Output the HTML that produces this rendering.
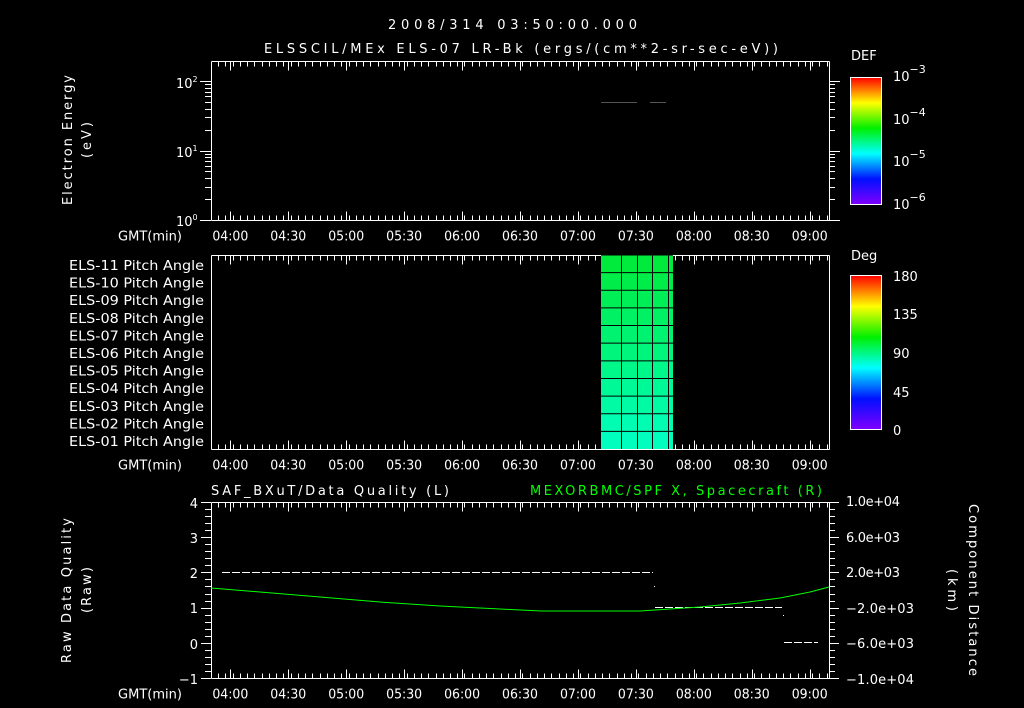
<!DOCTYPE html>
<html><head><meta charset="utf-8"><style>
html,body{margin:0;padding:0;background:#000;width:1024px;height:708px;overflow:hidden}
svg{display:block}
text{font-family:"DejaVu Sans","Liberation Sans",sans-serif;fill:#fff;font-size:13px}
</style></head><body>
<svg id="s" width="1024" height="708" viewBox="0 0 1024 708" xmlns="http://www.w3.org/2000/svg">
<defs>
<linearGradient id="rb" x1="0" y1="1" x2="0" y2="0">
<stop offset="0" stop-color="#8000ff"/><stop offset="0.2" stop-color="#0010ff"/><stop offset="0.4" stop-color="#00ffff"/><stop offset="0.6" stop-color="#00f000"/><stop offset="0.8" stop-color="#ffff00"/><stop offset="1" stop-color="#ff0000"/>
</linearGradient>
</defs>
<text x="388" y="29" font-size="17" textLength="249" lengthAdjust="spacing">2008/314 03:50:00.000</text>
<text x="264" y="53" font-size="16" textLength="514" lengthAdjust="spacing">ELSSCIL/MEx ELS-07 LR-Bk  (ergs/(cm**2-sr-sec-eV))</text>
<g id="g" fill="none" stroke="#fff" stroke-width="1"></g>
<text transform="translate(72,205) rotate(-90)" font-size="15" textLength="130" lengthAdjust="spacing">Electron Energy</text>
<text transform="translate(91,158) rotate(-90)" font-size="15" textLength="36" lengthAdjust="spacing">(eV)</text>
<text x="176" y="88">10<tspan font-size="8" dy="-6">2</tspan></text>
<text x="176" y="157">10<tspan font-size="8" dy="-6">1</tspan></text>
<text x="176" y="226">10<tspan font-size="8" dy="-6">0</tspan></text>
<line x1="601" y1="102.5" x2="637" y2="102.5" stroke="#555"/><line x1="650" y1="102.5" x2="666" y2="102.5" stroke="#555"/>
<rect x="850.5" y="77.5" width="31" height="127" fill="url(#rb)" stroke="#fff"/>
<text x="851" y="60" font-size="17">DEF</text>
<text x="893" y="81" font-size="17">10<tspan font-size="11" dy="-8">−3</tspan></text>
<text x="893" y="124" font-size="17">10<tspan font-size="11" dy="-8">−4</tspan></text>
<text x="893" y="166" font-size="17">10<tspan font-size="11" dy="-8">−5</tspan></text>
<text x="893" y="209" font-size="17">10<tspan font-size="11" dy="-8">−6</tspan></text>
<g id="pa"></g>
<rect x="850.5" y="275.5" width="31" height="154" fill="url(#rb)" stroke="#fff"/>
<text x="851" y="260" font-size="17">Deg</text>
<g font-size="17">
<text x="893" y="281">180</text>
<text x="893" y="319">135</text>
<text x="893" y="358">90</text>
<text x="893" y="397">45</text>
<text x="893" y="435">0</text>
</g>
<text x="211" y="495" font-size="16" textLength="238" lengthAdjust="spacing">SAF_BXuT/Data Quality (L)</text>
<text x="530" y="495" font-size="16" textLength="292" lengthAdjust="spacing" style="fill:#00ff00">MEXORBMC/SPF X, Spacecraft (R)</text>
<text transform="translate(71,663) rotate(-90)" font-size="15" textLength="145" lengthAdjust="spacing">Raw Data Quality</text>
<text transform="translate(91,613) rotate(-90)" font-size="15" textLength="46" lengthAdjust="spacing">(Raw)</text>
<text transform="translate(969,504) rotate(90)" font-size="15" textLength="172" lengthAdjust="spacing">Component Distance</text>
<text transform="translate(948,569) rotate(90)" font-size="15" textLength="42" lengthAdjust="spacing">(km)</text>
<g text-anchor="end" font-size="14">
<text x="198" y="508">4</text><text x="198" y="543">3</text><text x="198" y="578">2</text><text x="198" y="613">1</text><text x="198" y="649">0</text><text x="198" y="684">−1</text>
</g>
<g font-size="13">
<text x="846" y="506" textLength="54" lengthAdjust="spacing">1.0e+04</text><text x="846" y="542" textLength="54" lengthAdjust="spacing">6.0e+03</text><text x="846" y="577" textLength="54" lengthAdjust="spacing">2.0e+03</text><text x="846" y="613" textLength="68" lengthAdjust="spacing">−2.0e+03</text><text x="846" y="648" textLength="68" lengthAdjust="spacing">−6.0e+03</text><text x="846" y="684" textLength="68" lengthAdjust="spacing">−1.0e+04</text>
</g>
<line x1="222" y1="572.5" x2="653" y2="572.5" stroke="#fff" stroke-dasharray="8,2"/>
<line x1="655" y1="607.5" x2="782" y2="607.5" stroke="#fff" stroke-dasharray="8,2"/>
<line x1="784" y1="642.5" x2="818" y2="642.5" stroke="#fff" stroke-dasharray="8,2"/>
<rect x="654" y="586" width="1" height="1" fill="#fff"/><rect x="783" y="615" width="1" height="1" fill="#fff"/>
<polyline fill="none" stroke="#00ff00" points="211,588 260,592 320,597 380,602 440,606 500,609 541,611 640,611 700,607 740,603 780,598 810,592 829,587"/>
</svg>
<script>
var s=document.getElementById('s'),g=document.getElementById('g'),NS='http://www.w3.org/2000/svg';
function L(x1,y1,x2,y2,c){var l=document.createElementNS(NS,'line');l.setAttribute('x1',x1);l.setAttribute('y1',y1);l.setAttribute('x2',x2);l.setAttribute('y2',y2);if(c)l.setAttribute('stroke',c);g.appendChild(l);}
function T(x,y,t,a,fs){var e=document.createElementNS(NS,'text');e.setAttribute('x',x);e.setAttribute('y',y);if(a)e.setAttribute('text-anchor',a);if(fs)e.setAttribute('font-size',fs);e.textContent=t;s.appendChild(e);return e;}
var X0=211,X1=829;function tx(m){return X0+m*(X1-X0)/320;}
var panels=[[61,220],[255,449],[502,678]];
var labels=['04:00','04:30','05:00','05:30','06:00','06:30','07:00','07:30','08:00','08:30','09:00'];
var pa=document.getElementById('pa');
for(var r=0;r<11;r++){var y0=255+r*194/11;var f=r/10;var gc=Math.round(235+20*f),bc=Math.round(60+130*f);
var re=document.createElementNS(NS,'rect');re.setAttribute('x',601);re.setAttribute('y',y0);re.setAttribute('width',72);re.setAttribute('height',194/11);re.setAttribute('fill','rgb(0,'+gc+','+bc+')');pa.appendChild(re);
var gl=document.createElementNS(NS,'line');gl.setAttribute('x1',601);gl.setAttribute('x2',673);gl.setAttribute('y1',y0);gl.setAttribute('y2',y0);gl.setAttribute('stroke','#000');pa.appendChild(gl);}
[621,637,652,668].forEach(function(x){var gl=document.createElementNS(NS,'line');gl.setAttribute('x1',x+.5);gl.setAttribute('x2',x+.5);gl.setAttribute('y1',255);gl.setAttribute('y2',449);gl.setAttribute('stroke','#000');pa.appendChild(gl);});
var nm=['ELS-11','ELS-10','ELS-09','ELS-08','ELS-07','ELS-06','ELS-05','ELS-04','ELS-03','ELS-02','ELS-01'];
for(var r=0;r<11;r++){var e=T(69,270+r*17.6,nm[r]+' Pitch Angle',null,13);e.setAttribute('textLength',135);e.setAttribute('lengthAdjust','spacingAndGlyphs');}
panels.forEach(function(p){var t=p[0]+.5,b=p[1]+.5;
L(X0+.5,t,X1+.5,t);L(X0+.5,b,X1+.5,b);L(X0+.5,t,X0+.5,b);L(X1+.5,t,X1+.5,b);
for(var i=0;i<=85;i++){var m=i*3.75;var x=Math.round(tx(m))+.5;var h=5;L(x,t,x,t+h);L(x,b,x,b-h);}
for(var k=0;k<11;k++){var m2=10+30*k,xx=Math.round(tx(m2))+.5;L(xx,t,xx,t+9);L(xx,b,xx,b-9);var e=T(tx(m2)-18,b+20,labels[k],null,14);e.setAttribute('textLength',36);e.setAttribute('lengthAdjust','spacingAndGlyphs');}
var e=T(118,b+20,'GMT(min)',null,14);e.setAttribute('textLength',64);e.setAttribute('lengthAdjust','spacingAndGlyphs');});
var dec=69.5;for(var d=0;d<3;d++){for(var k=1;k<10;k++){var y=220-(d+Math.log10(k))*dec;if(y<61)continue;y=Math.round(y)+.5;var h=k==1?11:6;L(211-h,y,211,y);L(829,y,829+h,y);}}
for(var i=0;i<=25;i++){var y=Math.round(502+i*176/25)+.5;var h=(i%5==0)?10:6;L(211-h,y,211,y);L(829,y,829+h,y);}
for(var d=0;d<3;d++){for(var k=1;k<10;k++){var y=204-(d+Math.log10(k))*42.3;if(y<78)continue;y=Math.round(y)+.5;L(k==1?874:878,y,881,y);}}
for(var i=1;i<20;i++){var y=Math.round(429-i*154/20)+.5;L(i%5==0?874:878,y,881,y);}
</script>
</body></html>
